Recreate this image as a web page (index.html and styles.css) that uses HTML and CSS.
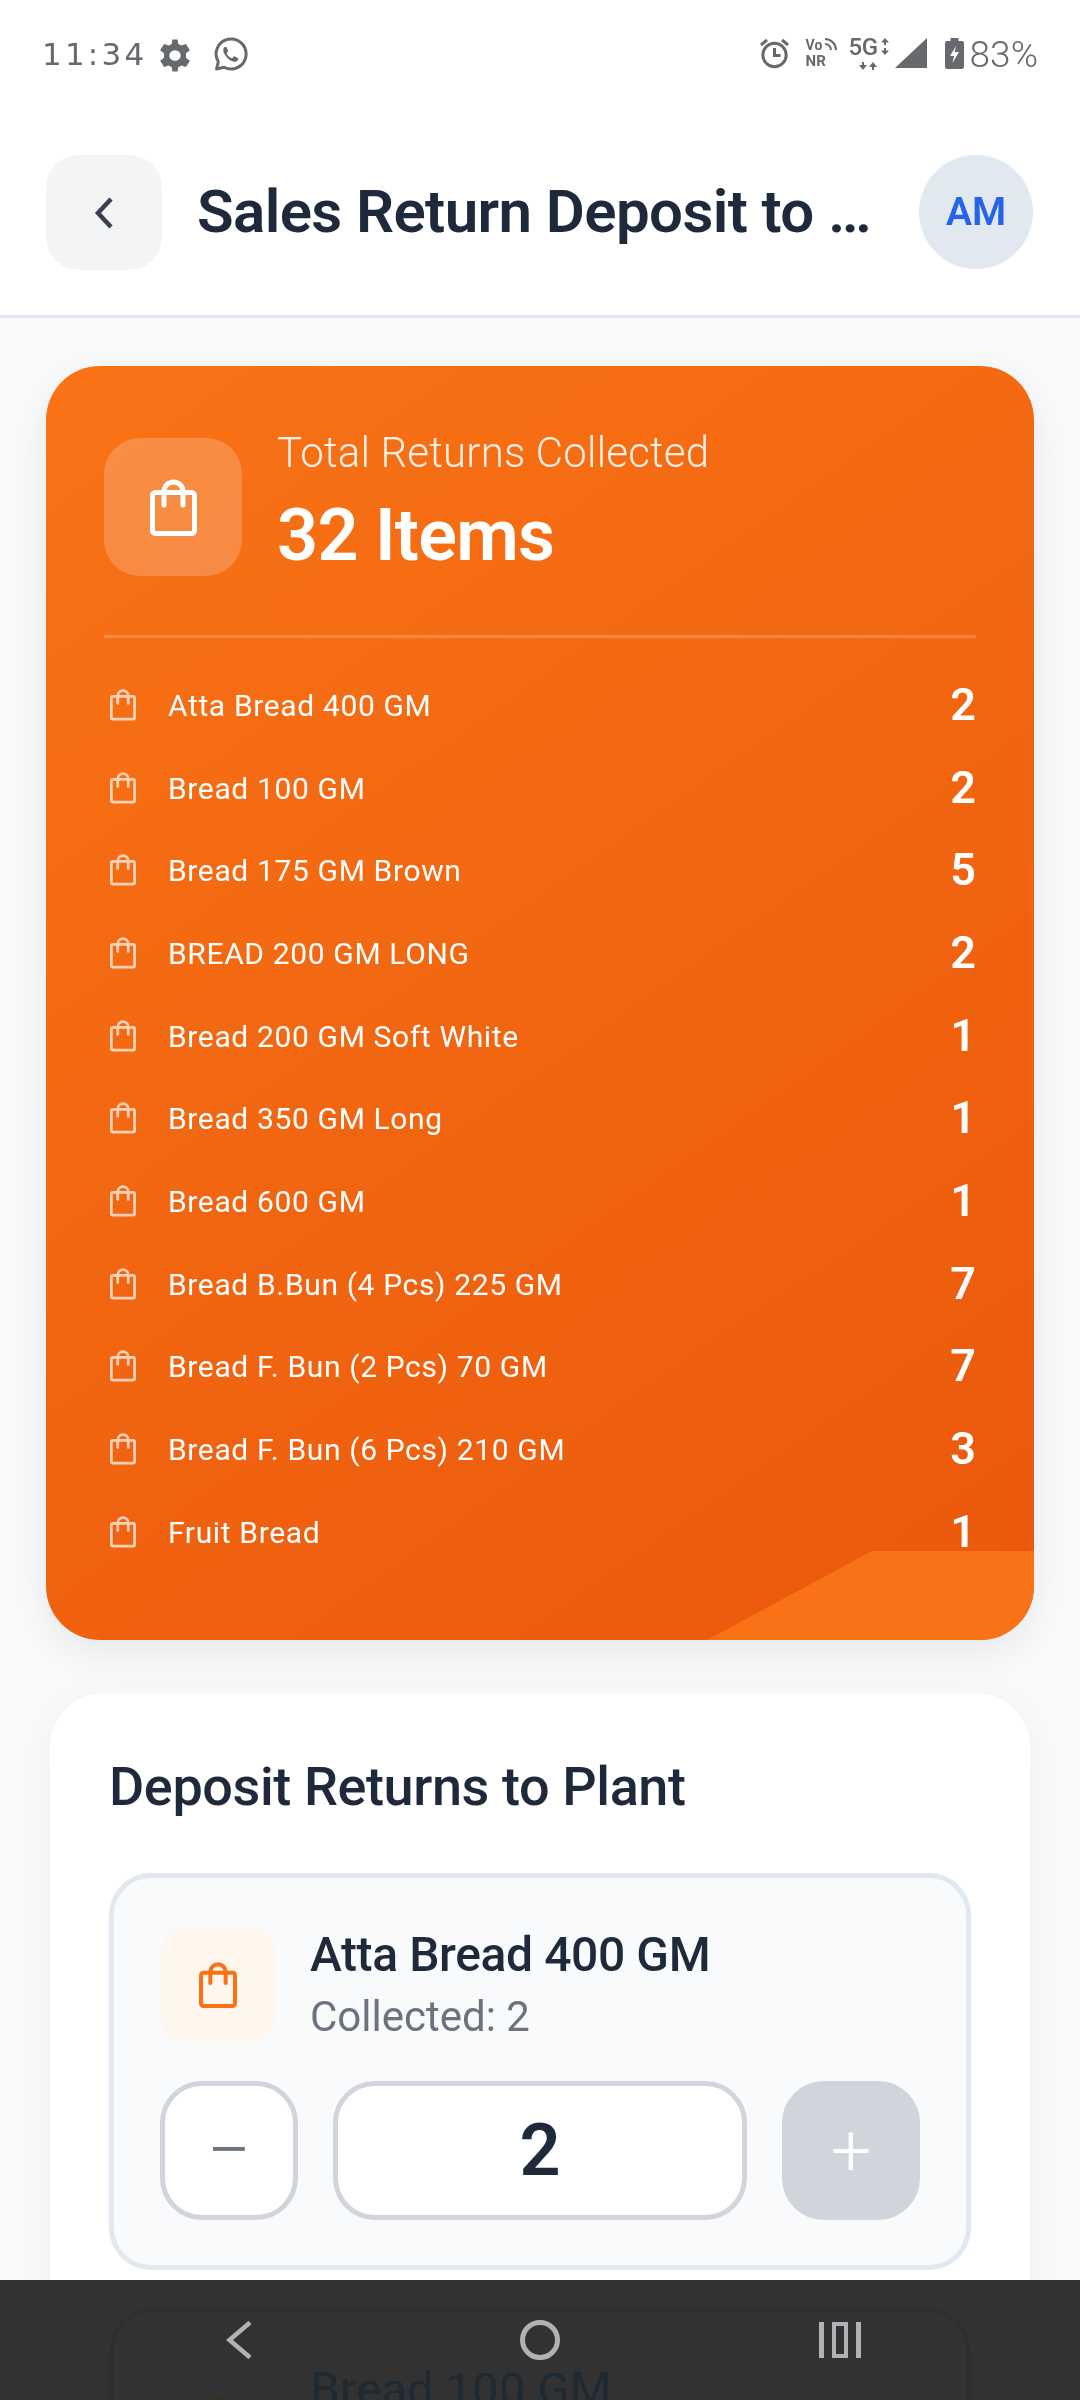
FILE: index.html
```html
<!DOCTYPE html>
<html lang="en">
<head>
<meta charset="utf-8">
<title>Sales Return Deposit to Plant</title>
<link rel="stylesheet" href="styles.css">
</head>
<body>
<svg class="defs" width="0" height="0" aria-hidden="true">
  <symbol id="bag" viewBox="0 0 47 58">
    <rect x="2.500" y="14.500" width="42" height="41" rx="3" fill="none" stroke="currentColor" stroke-width="5"/>
    <path d="M14 27V13.500a9.500 9.500 0 0 1 19 0V27" fill="none" stroke="currentColor" stroke-width="5" stroke-linecap="round"/>
  </symbol>
</svg>
<div class="page">
  <div class="status">
    <div class="status-left">
      <span class="time">11:34</span>
      <svg class="i-gear" viewBox="0 0 24 24" preserveAspectRatio="none"><path fill="currentColor" fill-rule="evenodd" d="M13.600 1h-3.200l-.5 3.100c-.7.3-1.300.6-1.900 1.100L5.100 4.100 2.600 8.400l2.500 2c-.1.7-.1 2.500 0 3.200l-2.500 2 2.500 4.300 2.900-1.100c.6.5 1.200.8 1.900 1.100l.5 3.100h3.200l.5-3.100c.7-.3 1.300-.6 1.900-1.100l2.900 1.100 2.500-4.300-2.500-2c.1-.7.1-2.500 0-3.200l2.500-2-2.500-4.300-2.900 1.100c-.6-.5-1.200-.8-1.900-1.100zM12 8.400a3.600 3.600 0 1 1 0 7.200 3.600 3.600 0 0 1 0-7.200z"/></svg>
      <svg class="i-wa" viewBox="0 0 35 35"><path d="M3.500 32l1.800-7.200A15 15 0 1 1 11 30.200z" fill="none" stroke="currentColor" stroke-width="3" stroke-linejoin="round"/><path d="M12.500 9.500c-1.500.6-2.500 2.300-2.200 4.200.6 4.500 6 10.500 11 11 1.900.2 3.500-1 4-2.500.2-.6 0-1-.5-1.300l-3-1.500c-.5-.2-.9-.1-1.200.3l-1 1.300c-.3.300-.6.400-1 .2-2-.9-3.700-2.500-4.800-4.500-.2-.4-.1-.7.200-1l.8-1c.3-.3.300-.7.200-1.100l-1.300-3.200c-.2-.5-.6-.6-1.200-.4z" fill="currentColor"/></svg>
    </div>
    <div class="status-right">
      <svg class="i-alarm" viewBox="0 0 31 31"><circle cx="15.500" cy="17" r="11.700" fill="none" stroke="currentColor" stroke-width="3"/><path d="M15.500 10v7.500h6M2 7l6-5M29 7l-6-5" fill="none" stroke="currentColor" stroke-width="3"/></svg>
      <div class="vonr">
        <span class="vo">Vo</span>
        <svg class="i-waves" viewBox="0 0 13 13"><path d="M1 1a11 11 0 0 1 11 11M1 6a6 6 0 0 1 6 6" fill="none" stroke="currentColor" stroke-width="2"/></svg>
        <span class="nr">NR</span>
      </div>
      <div class="net">
        <div class="net-top">
          <span class="fiveg">5G</span>
          <svg class="i-updown" viewBox="0 0 8 17"><path fill="currentColor" d="M4 0l4 4.500H5V7H3V4.500H0zM3 10h2v2.500h3L4 17l-4-4.500h3z"/></svg>
        </div>
        <svg class="i-dataflow" viewBox="0 0 18 8"><path fill="currentColor" d="M3 0h2v3h3L4 8 0 3h3zM14 0l4 5h-3v3h-2V5h-3z"/></svg>
      </div>
      <svg class="i-signal" viewBox="0 0 32 30"><path d="M32 0v30H0z" fill="currentColor"/></svg>
      <svg class="i-batt" viewBox="0 0 19 31"><path fill="currentColor" fill-rule="evenodd" d="M5.500 0h8v3H17a2 2 0 0 1 2 2v24a2 2 0 0 1-2 2H2a2 2 0 0 1-2-2V5a2 2 0 0 1 2-2h3.500zM11 8l-6 10h4l-1.500 7 6.500-11h-4.300z"/></svg>
      <span class="pct">83%</span>
    </div>
  </div>

  <header class="header">
    <button class="back" type="button" aria-label="Back">
      <svg class="i-back" viewBox="0 0 20 34"><path d="M17 3L4 17l13 14" fill="none" stroke="currentColor" stroke-width="4.500"/></svg>
    </button>
    <h1 class="title">Sales Return Deposit to …</h1>
    <div class="avatar">AM</div>
  </header>

  <main class="content">
    <section class="summary">
      <div class="summary-head">
        <div class="summary-icon"><svg class="bag bag-lg"><use href="#bag"/></svg></div>
        <div class="summary-text">
          <div class="summary-label">Total Returns Collected</div>
          <div class="summary-value">32 Items</div>
        </div>
      </div>
      <ul class="list">
        <li class="row"><svg class="bag bag-sm"><use href="#bag"/></svg><span class="row-name">Atta Bread 400 GM</span><span class="row-qty">2</span></li>
        <li class="row"><svg class="bag bag-sm"><use href="#bag"/></svg><span class="row-name">Bread 100 GM</span><span class="row-qty">2</span></li>
        <li class="row"><svg class="bag bag-sm"><use href="#bag"/></svg><span class="row-name">Bread 175 GM Brown</span><span class="row-qty">5</span></li>
        <li class="row"><svg class="bag bag-sm"><use href="#bag"/></svg><span class="row-name">BREAD 200 GM LONG</span><span class="row-qty">2</span></li>
        <li class="row"><svg class="bag bag-sm"><use href="#bag"/></svg><span class="row-name">Bread 200 GM Soft White</span><span class="row-qty">1</span></li>
        <li class="row"><svg class="bag bag-sm"><use href="#bag"/></svg><span class="row-name">Bread 350 GM Long</span><span class="row-qty">1</span></li>
        <li class="row"><svg class="bag bag-sm"><use href="#bag"/></svg><span class="row-name">Bread 600 GM</span><span class="row-qty">1</span></li>
        <li class="row"><svg class="bag bag-sm"><use href="#bag"/></svg><span class="row-name">Bread B.Bun (4 Pcs) 225 GM</span><span class="row-qty">7</span></li>
        <li class="row"><svg class="bag bag-sm"><use href="#bag"/></svg><span class="row-name">Bread F. Bun (2 Pcs) 70 GM</span><span class="row-qty">7</span></li>
        <li class="row"><svg class="bag bag-sm"><use href="#bag"/></svg><span class="row-name">Bread F. Bun (6 Pcs) 210 GM</span><span class="row-qty">3</span></li>
        <li class="row"><svg class="bag bag-sm"><use href="#bag"/></svg><span class="row-name">Fruit Bread</span><span class="row-qty">1</span></li>
      </ul>
      <div class="corner"></div>
    </section>

    <section class="deposit">
      <h2 class="deposit-title">Deposit Returns to Plant</h2>
      <div class="item">
        <div class="item-head">
          <div class="item-icon"><svg class="bag bag-md"><use href="#bag"/></svg></div>
          <div class="item-text">
            <div class="item-name">Atta Bread 400 GM</div>
            <div class="item-sub">Collected: 2</div>
          </div>
        </div>
        <div class="stepper">
          <button class="step" type="button">−</button>
          <div class="qty">2</div>
          <button class="step step-off" type="button">+</button>
        </div>
      </div>
      <div class="item item-under">
        <div class="item-head">
          <div class="item-icon"><svg class="bag bag-md"><use href="#bag"/></svg></div>
          <div class="item-text">
            <div class="item-name">Bread 100 GM</div>
          </div>
        </div>
      </div>
    </section>
  </main>

  <nav class="navbar">
    <svg class="nav-back" viewBox="0 0 26 38"><path d="M24 1.500L3.500 19 24 36.500" fill="none" stroke="currentColor" stroke-width="4.500"/></svg>
    <svg class="nav-home" viewBox="0 0 40 40"><circle cx="20" cy="20" r="17.500" fill="none" stroke="currentColor" stroke-width="5"/></svg>
    <svg class="nav-recent" viewBox="0 0 42 36"><path fill="currentColor" d="M0 0h5v36H0zM37 0h5v36h-5z"/><rect x="15" y="2" width="12" height="32" fill="none" stroke="currentColor" stroke-width="4"/></svg>
  </nav>
</div>
</body>
</html>
```
FILE: styles.css
```css
* { box-sizing: border-box; }
html, body { margin: 0; padding: 0; }
body { font-family: Roboto, "Noto Sans", sans-serif; background: #f8fafc; color: #1e293b; }
button { font-family: inherit; padding: 0; }
.defs { display: block; width: 0; height: 0; }
.page { position: relative; width: 1080px; height: 2400px; overflow: hidden; background: #f8fafc; }

.status { height: 72px; background: #fff; display: flex; justify-content: space-between; padding: 37px 42px 0; color: #66696d; align-items: flex-start; }
.status-left, .status-right { display: flex; align-items: flex-start; }
.time { font-family: "DejaVu Sans", sans-serif; font-weight: 400; font-size: 31px; line-height: 34px; letter-spacing: 3.200px; width: 114px; white-space: nowrap; }
.i-gear { width: 38px; height: 35px; margin-top: 1px; }
.i-wa { width: 35px; height: 35px; margin-left: 19px; }
.status-right { padding-top: 1px; }
.i-alarm { width: 31px; height: 31px; }
.vonr { width: 36px; height: 30px; margin-left: 16px; font-weight: 700; font-size: 14px; line-height: 14px; display: flex; flex-wrap: wrap; align-content: space-between; }
.i-waves { width: 13px; height: 13px; margin-left: 2px; }
.nr { width: 100%; font-size: 15px; }
.net { width: 40px; margin-left: 7px; display: flex; flex-direction: column; align-items: flex-start; }
.net-top { display: flex; gap: 3px; height: 24px; align-items: flex-start; }
.fiveg { font-size: 24px; line-height: 19px; font-weight: 500; letter-spacing: -.5px; white-space: nowrap; }
.i-updown { width: 8px; height: 17px; }
.i-dataflow { width: 18px; height: 8px; margin-left: 10px; }
.i-signal { width: 32px; height: 30px; margin-left: 6px; }
.i-batt { width: 19px; height: 31px; margin-left: 18px; }
.pct { font-weight: 300; font-size: 37px; line-height: 34px; margin-left: 6px; }

.header { height: 246px; background: #fff; border-bottom: 3px solid #e2e8f0; display: flex; align-items: flex-start; padding: 83px 47px 0 46px; }
.back { width: 116px; height: 115px; border: 0; border-radius: 33px; background: #f3f4f6; color: #374151; display: flex; align-items: center; justify-content: center; flex: none; }
.i-back { width: 20px; height: 34px; }
.title { flex: 1; min-width: 0; margin: 0 0 0 35px; font-size: 60px; line-height: 114px; letter-spacing: -.6px; font-weight: 600; color: #1e293b; white-space: nowrap; }
.avatar { width: 114px; height: 114px; border-radius: 50%; background: #e2e8f0; color: #2563eb; font-size: 39px; font-weight: 600; display: flex; align-items: center; justify-content: center; flex: none; }

.content { padding: 48px 46px 0; }
.summary { position: relative; height: 1274px; border-radius: 54px; overflow: hidden; background: linear-gradient(145deg, #f97316, #ea580c); padding: 66px 58px 0; color: #fff; box-shadow: 0 12px 40px rgba(0,0,0,.08); }
.summary-head { display: flex; align-items: center; gap: 35px; padding-bottom: 54px; border-bottom: 3px solid rgba(255,255,255,.2); }
.summary-icon { width: 138px; height: 138px; border-radius: 36px; background: rgba(255,255,255,.2); display: flex; align-items: center; justify-content: center; flex: none; }
.bag { display: block; flex: none; }
.bag-lg { width: 47px; height: 58px; color: #fff; }
.summary-label { font-size: 42px; line-height: 42px; font-weight: 300; opacity: .9; letter-spacing: .2px; }
.summary-value { font-size: 72px; line-height: 90px; font-weight: 600; letter-spacing: -.75px; margin-top: 17px; }
.list { list-style: none; margin: 0; padding: 25px 0 0; }
.row { height: 82.700px; display: flex; align-items: center; }
.bag-sm { width: 26px; height: 33px; margin-left: 6px; opacity: .7; }
.row-name { flex: 1; margin-left: 32px; padding-top: 2px; font-size: 30px; letter-spacing: .64px; }
.row-qty { font-size: 45px; font-weight: 600; }
.corner { position: absolute; right: 0; bottom: 0; width: 327px; height: 89px; background: #f97316; clip-path: polygon(0 100%, 165px 0, 100% 0, 100% 100%); }

.deposit { position: relative; margin: 53px 4px 0; background: #fff; border-radius: 54px; padding: 60px 59px 0; height: 800px; box-shadow: 0 6px 40px rgba(0,0,0,.05); }
.deposit-title { margin: 0; font-size: 54px; line-height: 68px; letter-spacing: -.4px; font-weight: 500; color: #1e293b; }
.item { margin: 52px 0 38px; height: 397px; border: 5px solid #e2e8f0; border-radius: 42px; background: #f8fafc; padding: 49px 46px; }
.item + .item { margin-top: 38px; }
.item-under { border-color: #2e2f33; }
.item-head { display: flex; gap: 35px; }
.item-icon { width: 115px; height: 115px; border-radius: 27px; background: #fff7ed; color: #f97316; display: flex; align-items: center; justify-content: center; flex: none; }
.bag-md { width: 38px; height: 47px; }
.item-name { font-size: 48px; line-height: 56px; letter-spacing: -.4px; font-weight: 500; color: #1e293b; }
.item-sub { font-size: 42px; line-height: 48px; color: #6b7280; margin-top: 10px; }
.stepper { display: flex; gap: 35px; margin-top: 39px; }
.step { width: 138px; height: 139px; border: 5px solid #d1d5db; border-radius: 42px; background: #fff; color: #6b7280; font-size: 78px; font-weight: 300; line-height: 1; flex: none; }
.step-off { background: #d1d5db; color: #fff; font-size: 72px; }
.qty { flex: 1; height: 139px; border: 5px solid #d1d5db; border-radius: 42px; background: #fff; font-size: 72px; font-weight: 600; display: flex; align-items: center; justify-content: center; color: #1e293b; }

.navbar { position: absolute; left: 0; right: 0; bottom: 0; height: 120px; color: #b2b2b6; }
.navbar::before { content: ""; position: absolute; inset: 0; background: #323232; mix-blend-mode: darken; }
.nav-back { position: absolute; left: 226px; top: 41px; width: 26px; height: 38px; }
.nav-home { position: absolute; left: 520px; top: 40px; width: 40px; height: 40px; }
.nav-recent { position: absolute; left: 819px; top: 42px; width: 42px; height: 36px; }
```
